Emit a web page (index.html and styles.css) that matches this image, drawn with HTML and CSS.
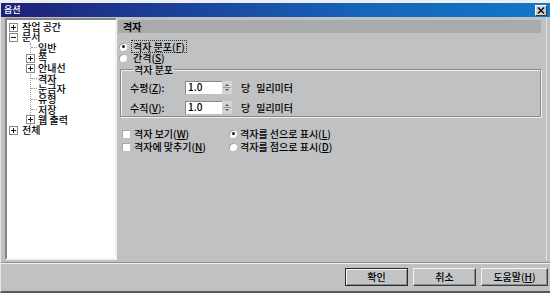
FILE: index.html
```html
<html>
    <head>
        <meta charset="utf-8">
        <link rel="stylesheet" href="styles.css">
    </head>
    <body>
        <div class="topstrip"></div>
        <div class="dialog">
            <div class="titlebar">
                <span class="title">옵션</span>
                <span class="close">
                    <svg width="10" height="9" viewBox="0 0 10 9"><path d="M2 1.5l6 6M8 1.5l-6 6" stroke="#111" stroke-width="1.6"/></svg>
                </span>
            </div>
            <div class="main">
                <!-- left tree of option pages -->
                <div class="tree">
                    <div class="node"><svg class="twist" width="9" height="9" viewBox="0 0 9 9"><rect x=".5" y=".5" width="8" height="8" fill="#fff" stroke="#8a8a8a"/><path d="M2 4.5h5M4.5 2v5" stroke="#111"/></svg><span>작업 공간</span></div>
                    <div class="node"><svg class="twist" width="9" height="9" viewBox="0 0 9 9"><rect x=".5" y=".5" width="8" height="8" fill="#fff" stroke="#8a8a8a"/><path d="M2 4.5h5" stroke="#111"/></svg><span>문서</span></div>
                    <div class="children">
                        <div class="node"><span class="stub"></span><span>일반</span></div>
                        <div class="node"><svg class="twist sub" width="9" height="9" viewBox="0 0 9 9"><rect x=".5" y=".5" width="8" height="8" fill="#fff" stroke="#8a8a8a"/><path d="M2 4.5h5M4.5 2v5" stroke="#111"/></svg><span>쪽</span></div>
                        <div class="node"><svg class="twist sub" width="9" height="9" viewBox="0 0 9 9"><rect x=".5" y=".5" width="8" height="8" fill="#fff" stroke="#8a8a8a"/><path d="M2 4.5h5M4.5 2v5" stroke="#111"/></svg><span>안내선</span></div>
                        <div class="node"><span class="stub"></span><span class="selected">격자</span></div>
                        <div class="node"><span class="stub"></span><span>눈금자</span></div>
                        <div class="node"><span class="stub"></span><span>유형</span></div>
                        <div class="node"><span class="stub"></span><span>저장</span></div>
                        <div class="node"><svg class="twist sub" width="9" height="9" viewBox="0 0 9 9"><rect x=".5" y=".5" width="8" height="8" fill="#fff" stroke="#8a8a8a"/><path d="M2 4.5h5M4.5 2v5" stroke="#111"/></svg><span>웹 출력</span></div>
                    </div>
                    <div class="node"><svg class="twist" width="9" height="9" viewBox="0 0 9 9"><rect x=".5" y=".5" width="8" height="8" fill="#fff" stroke="#8a8a8a"/><path d="M2 4.5h5M4.5 2v5" stroke="#111"/></svg><span>전체</span></div>
                </div>
                <!-- right: grid page -->
                <div class="page">
                    <div class="page-head">격자</div>
                    <div class="page-body">
                        <div class="radio-row"><span class="radio on"></span><span class="focus">격자 분포(<u>F</u>)</span></div>
                        <div class="radio-row"><span class="radio"></span><span>간격(<u>S</u>)</span></div>
                        <fieldset class="group">
                            <legend>격자 분포</legend>
                            <div class="field-row">
                                <span class="field-label">수평(<u>Z</u>):</span>
                                <span class="spin-input">1.0</span>
                                <span class="spinner"><svg width="10" height="13" viewBox="0 0 10 13"><rect width="10" height="13" fill="#d4d4d4"/><path d="M3 5h4L5 3zM3 8h4L5 10z" fill="#555"/><path d="M1 6.5h8" stroke="#999"/></svg></span>
                                <span class="unit"><span>당</span><span>밀리미터</span></span>
                            </div>
                            <div class="field-row">
                                <span class="field-label">수직(<u>V</u>):</span>
                                <span class="spin-input">1.0</span>
                                <span class="spinner"><svg width="10" height="13" viewBox="0 0 10 13"><rect width="10" height="13" fill="#d4d4d4"/><path d="M3 5h4L5 3zM3 8h4L5 10z" fill="#555"/><path d="M1 6.5h8" stroke="#999"/></svg></span>
                                <span class="unit"><span>당</span><span>밀리미터</span></span>
                            </div>
                        </fieldset>
                        <div class="options">
                            <div class="opt"><span class="check"></span><span>격자 보기(<u>W</u>)</span></div>
                            <div class="opt opt-radio"><span class="radio on"></span><span>격자를 선으로 표시(<u>L</u>)</span></div>
                            <div class="opt"><span class="check"></span><span>격자에 맞추기(<u>N</u>)</span></div>
                            <div class="opt opt-radio"><span class="radio"></span><span>격자를 점으로 표시(<u>D</u>)</span></div>
                        </div>
                    </div>
                </div>
            </div>
            <div class="sep"></div>
            <div class="buttons">
                <span class="btn btn-default"><span>확인</span></span>
                <span class="btn"><span>취소</span></span>
                <span class="btn btn-wide"><span>도움말(<u>H</u>)</span></span>
            </div>
        </div>
    </body>
</html>
```

FILE: styles.css
```css
body {
    margin: 0;
    width: 550px;
    height: 293px;
    overflow: hidden;
    background: #c0c1c3;
    font-family: "Noto Sans CJK KR", "Noto Sans", sans-serif;
    font-size: 10px;
    font-weight: 500;
    color: #000;
}
u {
    text-decoration: underline;
}
.topstrip {
    height: 3px;
    background: #eceef0;
}
.dialog {
    height: 290px;
    box-sizing: border-box;
    border-left: 1px solid #e6e6e6;
    border-bottom: 2px solid #5a5a5a;
    display: flex;
    flex-direction: column;
}
.titlebar {
    height: 14px;
    display: flex;
    align-items: center;
    justify-content: space-between;
    padding: 0 3px 0 3px;
    background: linear-gradient(to right, #1d2074, #1b3f98 30%, #1664b8 65%, #1178c9);
}
.title {
    color: #fff;
    font-size: 9px;
    line-height: 14px;
}
.close {
    width: 12px;
    height: 11px;
    box-sizing: border-box;
    background: #cfd0d2;
    border: 1px solid;
    border-color: #fafafa #3a3a3a #3a3a3a #fafafa;
    display: flex;
    align-items: center;
    justify-content: center;
}
.main {
    display: flex;
    height: 242px;
    margin-top: 1px;
}
.tree {
    width: 112px;
    margin-left: 4px;
    box-sizing: border-box;
    border: 2px solid;
    border-color: #858585 #f2f2f2 #f2f2f2 #858585;
    background: #fff;
    padding-top: 2px;
}
.node {
    display: flex;
    align-items: center;
    height: 10.3px;
    line-height: 10px;
    white-space: nowrap;
    padding-left: 2px;
}
.twist {
    margin-right: 4px;
    flex: none;
}
.children {
    margin-left: 23px;
    border-left: 1px dotted #9a9a9a;
}
.children .node {
    padding-left: 0;
}
.twist.sub {
    margin-left: -5px;
    margin-right: 3px;
}
.stub {
    width: 6px;
    margin-right: 1px;
    border-bottom: 1px dotted #9a9a9a;
}
.selected {
    background: #f0f0f0;
}
.page {
    flex: 1;
    margin-left: 1px;
    margin-right: 3px;
    border-right: 1px solid #e2e2e2;
    display: flex;
    flex-direction: column;
}
.page-head {
    height: 13px;
    line-height: 13px;
    margin-top: 2px;
    margin-right: 5px;
    padding-left: 5px;
    background: #a9aaac;
    font-weight: bold;
}
.page-body {
    padding: 8px 0 0 1px;
}
.radio-row {
    display: flex;
    align-items: center;
    gap: 6px;
    height: 11px;
    line-height: 11px;
}
.radio {
    width: 8px;
    height: 8px;
    flex: none;
    border-radius: 50%;
    background: #fff;
    box-shadow: inset 1px 1px 0 #a0a0a0;
    display: flex;
    align-items: center;
    justify-content: center;
}
.radio.on::after {
    content: "";
    width: 3px;
    height: 3px;
    border-radius: 50%;
    background: #1a1a1a;
}
.focus {
    outline: 1px dotted #333;
    padding: 0 1px;
    margin-left: -1px;
}
.group {
    margin: 1px 5px 0 1px;
    padding: 6px 0 2px 9px;
    border: 1px solid #8a8a8a;
    box-shadow: 1px 1px 0 #f0f0f0, inset 1px 1px 0 #f0f0f0;
}
.group legend {
    padding: 0 1px;
    margin-left: 3px;
    line-height: 11px;
    font-size: 10px;
}
.field-row {
    display: flex;
    align-items: center;
    height: 13px;
    line-height: 13px;
}
.field-row + .field-row {
    margin-top: 7px;
}
.field-label {
    width: 55px;
}
.spin-input {
    width: 37px;
    height: 13px;
    box-sizing: border-box;
    background: #fff;
    border-top: 1px solid #8a8a8a;
    border-left: 1px solid #8a8a8a;
    padding-left: 2px;
    line-height: 10px;
}
.spinner {
    width: 10px;
    height: 13px;
    display: flex;
}
.unit {
    margin-left: 9px;
    display: flex;
    gap: 6px;
}
.options {
    display: grid;
    grid-template-columns: 107px auto;
    margin-top: 10px;
    padding-left: 3px;
}
.opt {
    display: flex;
    align-items: center;
    gap: 4px;
    height: 13px;
    line-height: 13px;
    white-space: nowrap;
}
.opt-radio {
    gap: 3px;
}
.check {
    width: 8px;
    height: 8px;
    flex: none;
    background: #fff;
    box-shadow: inset 1px 1px 0 #a8a8a8;
}
.sep {
    margin-top: 2px;
    border-top: 1px solid #8e8e8e;
    border-bottom: 1px solid #f2f2f2;
}
.buttons {
    display: flex;
    justify-content: flex-end;
    gap: 5px;
    margin-top: 4px;
    padding-right: 2px;
}
.btn {
    width: 63px;
    height: 18px;
    box-sizing: border-box;
    display: flex;
    align-items: center;
    justify-content: center;
    border: 1px solid;
    border-color: #f4f4f4 #3e3e3e #3e3e3e #f4f4f4;
    box-shadow: inset -1px -1px 0 #8c8c8c;
    background: #c3c4c6;
    line-height: 16px;
}
.btn-default {
    border-color: #2a2a2a;
    box-shadow: inset 1px 1px 0 #f4f4f4, inset -1px -1px 0 #8c8c8c;
}
.btn-wide {
    width: 67px;
}
```
